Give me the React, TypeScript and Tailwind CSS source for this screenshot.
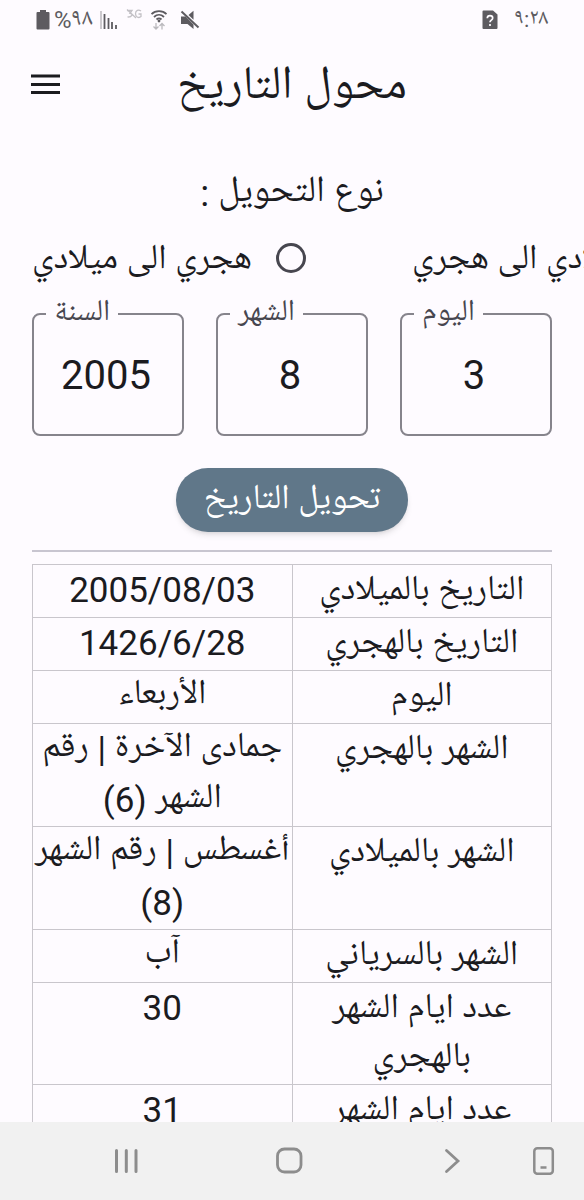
import { useState } from "react";

interface Campo {
  id: string;
  etiqueta: string;
  valor: string;
}

interface Fila {
  titulo: string;
  valor: string;
}

const CAMPOS: Campo[] = [
  { id: "day", etiqueta: "اليوم", valor: "3" },
  { id: "month", etiqueta: "الشهر", valor: "8" },
  { id: "year", etiqueta: "السنة", valor: "2005" },
];

const FILAS: Fila[] = [
  { titulo: "التاريخ بالميلادي", valor: "2005/08/03" },
  { titulo: "التاريخ بالهجري", valor: "1426/6/28" },
  { titulo: "اليوم", valor: "الأربعاء" },
  { titulo: "الشهر بالهجري", valor: "جمادى الآخرة | رقم الشهر (6)" },
  { titulo: "الشهر بالميلادي", valor: "أغسطس | رقم الشهر (8)" },
  { titulo: "الشهر بالسرياني", valor: "آب" },
  { titulo: "عدد ايام الشهر بالهجري", valor: "30" },
  { titulo: "عدد ايام الشهر بالميلادي", valor: "31" },
];

const StatusBar = () => (
  <div
    dir="ltr"
    className="flex h-10 shrink-0 items-center justify-between px-9 text-[#5d5b60]"
  >
    <div className="flex items-center gap-1">
      <svg className="h-5 w-[14px]" viewBox="0 0 14 20" fill="currentColor">
        <path d="M4 0h6v2h2.500a1 1 0 0 1 1 1v15.500a1 1 0 0 1-1 1h-11a1 1 0 0 1-1-1V3a1 1 0 0 1 1-1H4z" />
      </svg>
      <span className="text-2xl leading-5">%٩٨</span>
      <svg className="ml-1 h-5 w-[18px]" viewBox="0 0 18 20">
        <path d="M1 1v18" stroke="#bbb9be" strokeWidth="1.500" />
        <path d="M4.500 4v15M8.500 8v11M12 12v7M16 15v4" stroke="currentColor" strokeWidth="1.800" />
      </svg>
      <svg
        className="mb-3 ml-1 h-[10px] w-4"
        viewBox="0 0 16 10"
        fill="none"
        stroke="#c3c1c6"
        strokeWidth="1.300"
      >
        <path d="M1 1.500h5L4 4.300c3.500.2 2 4.200-2.500 3.600M1 .5l9 8.500M15 2C12.500.2 9.500 1.200 9.500 4.800s3.500 4.600 5.500 2.800V5h-2.500" />
      </svg>
      <svg className="ml-1 h-5 w-[18px]" viewBox="0 0 18 20" fill="none">
        <path
          d="M1.500 4.200c4-4 11-4 15 0M4 7c3-2.800 7-2.800 10 0M6.500 9.500c1.500-1.400 3.500-1.400 5 0"
          stroke="currentColor"
          strokeWidth="1.800"
        />
        <circle cx="9" cy="11" r="1.400" fill="currentColor" />
        <path d="M6 13v6M3.500 16.500L6 19l2.500-2.500M12 19.500v-6M9.500 16L12 13.500l2.500 2.500" stroke="#bbb9be" strokeWidth="1.300" />
      </svg>
      <svg className="ml-2 h-5 w-5" viewBox="0 0 20 20" fill="currentColor">
        <path d="M1 6.500h4.500L13.500 14.500V19L7.500 14H1zM8.500 5L13.500.8v9z" />
        <path d="M1.500 1.500L18.500 17.500" stroke="currentColor" strokeWidth="2" />
      </svg>
    </div>
    <div className="flex items-center gap-4">
      <svg className="h-5 w-4" viewBox="0 0 16 20">
        <path d="M2 .5h9l4.500 4V18a1 1 0 0 1-1 1h-13a1 1 0 0 1-1-1V1.500a1 1 0 0 1 1-1z" fill="currentColor" />
        <path d="M5.300 8.200c0-3.500 5.400-3.300 5.400-.2 0 2-2.700 2.200-2.700 4.200M8 14v2" stroke="#fefbff" strokeWidth="1.700" fill="none" />
      </svg>
      <span className="text-[22px] leading-5">٩:٢٨</span>
    </div>
  </div>
);

const NavBar = () => (
  <nav
    dir="ltr"
    className="flex h-[78px] shrink-0 items-center justify-between bg-[#f1f1f1] pl-28 pr-7 text-[#8d8d8d]"
  >
    <button aria-label="التطبيقات الأخيرة">
      <svg className="h-7 w-7" viewBox="0 0 28 28" stroke="currentColor" strokeWidth="3" strokeLinecap="round">
        <path d="M4.500 3.500v21M14.300 3.500v21M24 3.500v21" />
      </svg>
    </button>
    <button aria-label="الشاشة الرئيسية" className="ml-[68px]">
      <svg className="h-7 w-7" viewBox="0 0 28 28" fill="none" stroke="currentColor" strokeWidth="2.800">
        <rect x="2.500" y="2" width="23.500" height="23" rx="7" />
      </svg>
    </button>
    <button aria-label="رجوع" className="ml-[68px]">
      <svg className="h-7 w-7" viewBox="0 0 28 28" fill="none" stroke="currentColor" strokeWidth="2.800" strokeLinecap="round">
        <path d="M9.500 3.500L21 14 9.500 24.500" />
      </svg>
    </button>
    <button aria-label="إخفاء الشريط">
      <svg className="h-7 w-6" viewBox="0 0 24 28" fill="none" stroke="currentColor" strokeWidth="2.500">
        <rect x="2.300" y="1.300" width="18.500" height="25.500" rx="3" />
        <path d="M8.500 20.500h6" />
      </svg>
    </button>
  </nav>
);

const App = () => {
  const [tipo, setTipo] = useState("");
  const [campos, setCampos] = useState(CAMPOS);

  const handleCampo = (id: string, valor: string) => {
    setCampos((prev) => prev.map((c) => (c.id === id ? { ...c, valor } : c)));
  };

  return (
    <div
      dir="rtl"
      className="flex h-screen flex-col overflow-hidden bg-[#fefbff] text-[#1b1b1f]
                 font-[Roboto,'Noto_Naskh_Arabic_UI','Noto_Naskh_Arabic','DejaVu_Sans',sans-serif]"
    >
      <StatusBar />

      <header dir="ltr" className="grid h-[88px] shrink-0 grid-cols-[1fr_auto_1fr] items-center px-[30px]">
        <button aria-label="القائمة" className="justify-self-start">
          <svg className="h-6 w-[30px]" viewBox="0 0 30 24" stroke="currentColor" strokeWidth="3">
            <path d="M1 4h29M1 12.500h29M1 20.500h29" />
          </svg>
        </button>
        <h1 className="pt-2 text-[47px] leading-[60px]">محول التاريخ</h1>
      </header>

      <main className="flex-1 overflow-x-hidden overflow-y-auto px-8 [scrollbar-width:none]">
        <p className="mt-9 text-center text-[37px] leading-[60px]">نوع التحويل :</p>

        {/* Las opciones se anclan a la izquierda y la primera se sale de la pantalla */}
        <div className="mt-1 flex h-[60px] items-center justify-end gap-[106px] text-[35px] whitespace-nowrap">
          {["ميلادي الى هجري", "هجري الى ميلادي"].map((opcion) => (
            <label key={opcion} className="flex shrink-0 items-center gap-6">
              <input
                type="radio"
                name="tipo"
                checked={tipo === opcion}
                onChange={() => setTipo(opcion)}
                className="size-[30px] appearance-none rounded-full border-3 border-[#47464f]
                           checked:border-8"
              />
              <span className="pt-2">{opcion}</span>
            </label>
          ))}
        </div>

        <div className="mt-2 grid grid-cols-3 gap-8">
          {campos.map((campo) => (
            <fieldset
              key={campo.id}
              dir="ltr"
              className="min-w-0 rounded-lg border-2 border-[#86848c] pl-3"
            >
              <legend className="px-2 text-[30px] leading-9 text-[#47464f]">
                <label htmlFor={campo.id}>{campo.etiqueta}</label>
              </legend>
              <input
                id={campo.id}
                type="text"
                inputMode="numeric"
                value={campo.valor}
                onChange={(e) => handleCampo(campo.id, e.target.value)}
                className="mb-4 h-[86px] w-full bg-transparent pr-4 text-center text-[40px] outline-none"
              />
            </fieldset>
          ))}
        </div>

        <div className="mt-8 flex justify-center">
          <button className="h-16 rounded-full bg-[#607789] px-7 pt-1 text-[35px] text-white shadow-md">
            تحويل التاريخ
          </button>
        </div>

        <hr className="mt-[18px] border-t-2 border-[#c8c5d0]" />

        <table className="mt-3 w-full table-fixed border-collapse text-center text-[35px] leading-[51px]">
          <tbody>
            {FILAS.map((fila) => (
              <tr key={fila.titulo} className="h-[53px] align-top">
                <th
                  scope="row"
                  className="border border-[#c9c6cc] px-4 pt-[3px] leading-[49px] font-normal"
                >
                  {fila.titulo}
                </th>
                <td className="border border-[#c9c6cc]">{fila.valor}</td>
              </tr>
            ))}
          </tbody>
        </table>
      </main>

      <NavBar />
    </div>
  );
};

export default App;
